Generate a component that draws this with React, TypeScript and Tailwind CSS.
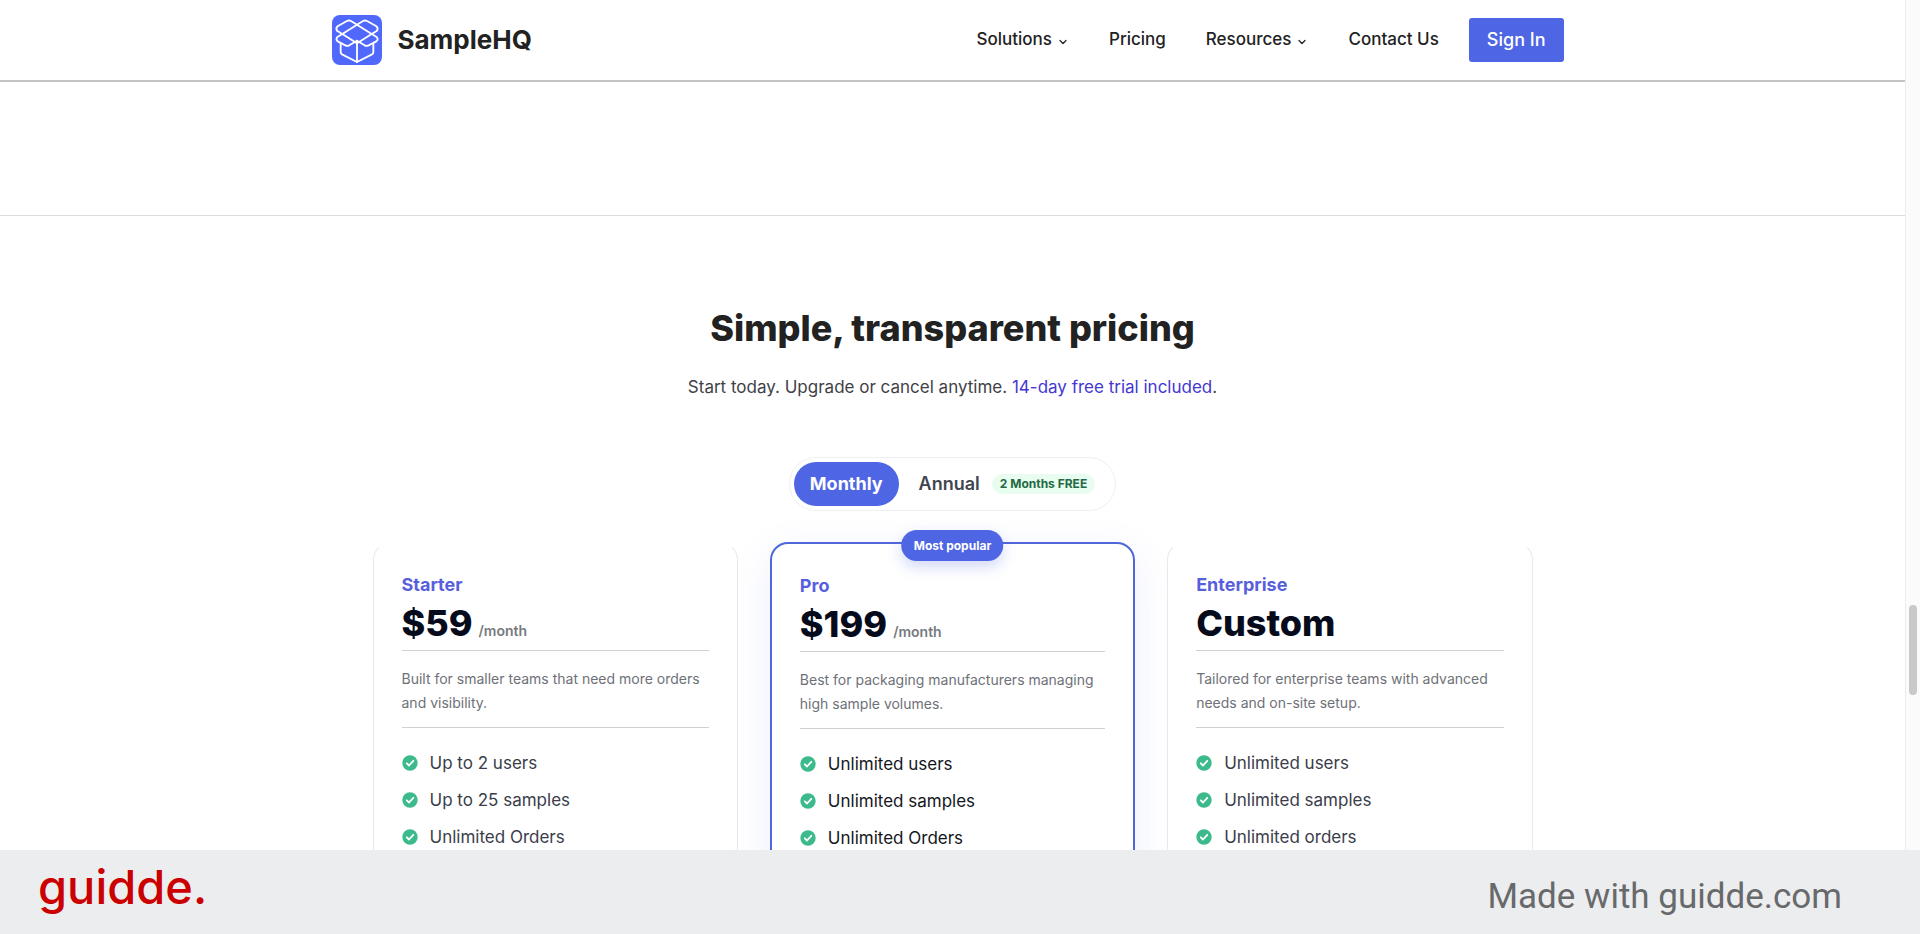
import { ChevronDown } from "lucide-react";
import { clsx } from "clsx";

type Plan = {
  name: string;
  price: string;
  period?: string;
  description: string;
  features: string[];
  popular?: boolean;
};

const plans: Plan[] = [
  {
    name: "Starter",
    price: "$59",
    period: "/month",
    description: "Built for smaller teams that need more orders and visibility.",
    features: ["Up to 2 users", "Up to 25 samples", "Unlimited Orders"],
  },
  {
    name: "Pro",
    price: "$199",
    period: "/month",
    description: "Best for packaging manufacturers managing high sample volumes.",
    features: ["Unlimited users", "Unlimited samples", "Unlimited Orders"],
    popular: true,
  },
  {
    name: "Enterprise",
    price: "Custom",
    description: "Tailored for enterprise teams with advanced needs and on-site setup.",
    features: ["Unlimited users", "Unlimited samples", "Unlimited orders"],
  },
];

const links = [
  { label: "Solutions", menu: true },
  { label: "Pricing" },
  { label: "Resources", menu: true },
  { label: "Contact Us" },
];

const BoxLogo = () => (
  <svg viewBox="0 0 150 150" className="size-[50px]" fill="none" aria-hidden="true">
    <rect width="150" height="150" rx="24" fill="#5068fb" />
    <g stroke="#fff" strokeWidth="5.5" strokeLinecap="round" strokeLinejoin="round">
      <path d="M75 29 L119 57 L75 85 L31 57 Z" />
      <path d="M75 29 L57 18 Q51 15 45 18 L18 33 Q10 39 15 47 L31 57" />
      <path d="M75 29 L93 18 Q99 15 105 18 L132 33 Q140 39 135 47 L119 57" />
      <path d="M31 57 L16 66 Q10 73 17 79 L40 91 Q46 94 52 91 L75 77" />
      <path d="M119 57 L134 66 Q140 73 133 79 L110 91 Q104 94 98 91 L75 77" />
      <path d="M26 85 V111 Q26 116 30 118 L75 141 L120 118 Q124 116 124 111 V85" />
      <path d="M75 80 V141" />
    </g>
  </svg>
);

const CheckIcon = () => (
  <svg viewBox="0 0 16 16" className="size-4 shrink-0" fill="none" aria-hidden="true">
    <circle cx="8" cy="8" r="7.7" fill="#3dba8c" />
    <path d="M4.8 8.3 L7 10.5 L11.3 5.8" stroke="#fff" strokeWidth="1.8" strokeLinecap="round" strokeLinejoin="round" />
  </svg>
);

const Header = () => (
  <header className="border-b-2 border-[#c4c4c4] bg-white">
    <div className="mx-auto flex h-20 max-w-[1242px] items-center justify-between pr-2.5">
      <a href="#" className="flex items-center gap-4">
        <BoxLogo />
        <span className="text-[26px] leading-8 font-bold text-[#222]">SampleHQ</span>
      </a>
      <nav className="flex items-center text-[17px] font-medium text-[#222]">
        <div className="mr-[30px] flex items-center gap-10">
          {links.map((link) => (
            <a key={link.label} href="#" className="flex items-center gap-[5px]">
              {link.label}
              {link.menu && <ChevronDown className="mt-1 size-3" strokeWidth={2.5} />}
            </a>
          ))}
        </div>
        <button className="h-11 rounded-[3px] bg-[#4f66e4] px-[18px] text-lg font-medium text-white">Sign In</button>
      </nav>
    </div>
  </header>
);

const PlanCard = ({ plan }: { plan: Plan }) => (
  <article
    className={clsx(
      "relative rounded-[18px] bg-white px-7 pt-7 pb-24",
      plan.popular
        ? "border-2 border-[#5266dc] shadow-[0_12px_40px_rgba(79,102,228,0.10)]"
        : "border border-[#e9e9ec] border-t-transparent"
    )}
  >
    {plan.popular && (
      <span className="absolute -top-[14px] left-1/2 -translate-x-1/2 rounded-full bg-[#4f66e4] px-3 py-[6px] text-xs leading-[19px] font-bold whitespace-nowrap text-white shadow-[0_6px_14px_rgba(79,102,228,0.25)]">
        Most popular
      </span>
    )}
    <h3 className="text-lg leading-7 font-bold text-[#585fdc]">{plan.name}</h3>
    <p className="flex items-baseline gap-1.5 border-b border-[#cfd1d6] pb-[3px] text-[36px] leading-[48px] font-extrabold text-[#060b1c]">
      {plan.price}
      {plan.period && <span className="text-sm font-semibold text-[#777a80]">{plan.period}</span>}
    </p>
    <p className="border-b border-[#cfd1d6] pt-4 pb-3 text-[14px] leading-6 text-[#6e7178]">{plan.description}</p>
    <ul className="mt-[22px] space-y-[11px] text-[17px] leading-[26px]">
      {plan.features.map((feature) => (
        <li key={feature} className={clsx("flex items-center gap-3", plan.popular ? "text-[#14161d]" : "text-[#3a3d4a]")}>
          <CheckIcon />
          {feature}
        </li>
      ))}
    </ul>
  </article>
);

const Pricing = () => (
  <section className="mt-[133px] border-t border-[#dcdcdc] px-6 pt-[85px]">
    <h2 className="text-center text-[36px] leading-[54px] font-extrabold text-[#222]">Simple, transparent pricing</h2>
    <p className="mt-[18px] text-center text-[17px] leading-7 text-[#3f4147]">
      Start today. Upgrade or cancel anytime.{" "}
      <a href="#" className="text-[#4338d0]">14-day free trial included</a>.
    </p>

    {/* Billing toggle */}
    <div className="mx-auto mt-14 flex w-fit items-center rounded-full border border-[#f0f0f2] p-1 pr-5 text-lg font-bold">
      <button className="h-11 rounded-full bg-[#4f66e4] px-4 text-white">Monthly</button>
      <button className="flex h-11 items-center gap-3 pl-5 font-semibold text-[#40454f]">
        Annual
        <span className="rounded-full bg-[#e9fcf0] px-2 text-xs leading-5 font-bold text-[#226b43]">2 Months FREE</span>
      </button>
    </div>

    <div className="mx-auto mt-[31px] grid max-w-[1160px] grid-cols-3 gap-8">
      {plans.map((plan) => (
        <PlanCard key={plan.name} plan={plan} />
      ))}
    </div>
  </section>
);

const ScrollTrack = () => (
  <div className="flex w-[15px] shrink-0 flex-col items-center border-l border-[#ececec] bg-[#fbfbfb]">
    <div className="flex-[605]" />
    <div className="w-2 flex-[90] rounded-sm bg-[#c9c9c9]" />
    <div className="flex-[155]" />
  </div>
);

const Footer = () => (
  <footer className="flex h-[84px] shrink-0 items-center justify-between bg-[#ecedef] pr-[78px] pl-[38px]">
    <span className="mb-3 text-[47px] leading-none font-medium text-[#cb0000]">guidde.</span>
    <span className="mt-2 font-[Roboto,sans-serif] text-[35px] leading-none text-[#67696b]">Made with guidde.com</span>
  </footer>
);

const App = () => {
  return (
    <div className="flex h-screen flex-col bg-white font-[Inter,sans-serif]">
      <div className="flex min-h-0 flex-1">
        <main className="flex-1 overflow-hidden">
          <Header />
          <Pricing />
        </main>
        <ScrollTrack />
      </div>
      <Footer />
    </div>
  );
};

export default App;
